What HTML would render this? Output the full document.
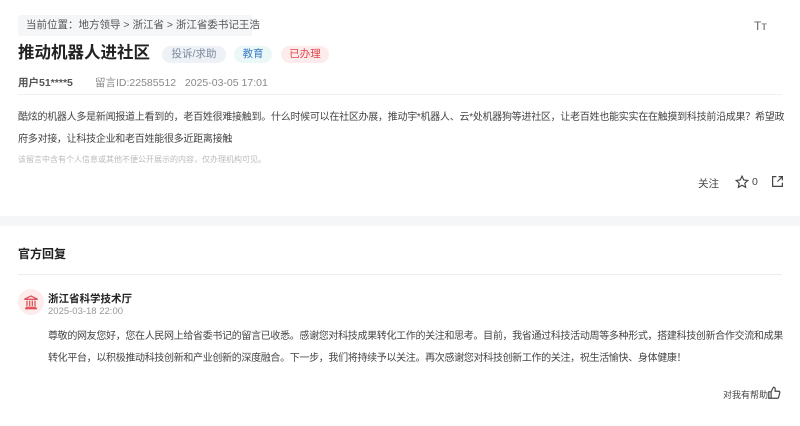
<!DOCTYPE html><html><head><meta charset="utf-8"><style>
body{margin:0;width:800px;height:426px;background:#fff;font-family:"Liberation Sans","Noto Sans CJK SC",sans-serif;position:relative;overflow:hidden;color:#333}
.a{position:absolute;white-space:nowrap}
.tag{position:absolute;height:17px;line-height:17px;border-radius:9px;font-size:10.5px;text-align:center}
</style></head><body>
<div class="a" style="left:18px;top:15px;width:234px;height:21px;background:#f5f6f8;border-radius:2px;font-size:10.5px;line-height:21px;color:#555;padding-left:8px;box-sizing:border-box">当前位置：地方领导 &gt; 浙江省 &gt; 浙江省委书记王浩</div>
<div class="a" style="left:754px;top:19px;font-size:12px;color:#666">Tт</div>
<div class="a" style="left:18px;top:40px;font-size:16.5px;font-weight:bold;color:#222;line-height:26px">推动机器人进社区</div>
<div class="tag" style="left:162px;top:46px;width:64px;background:#eef2f6;color:#7a8a9e">投诉/求助</div>
<div class="tag" style="left:234px;top:46px;width:38px;background:#ebf8f8;color:#3a7ac0">教育</div>
<div class="tag" style="left:281px;top:46px;width:48px;background:#fdeceb;color:#e0454a">已办理</div>
<div class="a" style="left:18px;top:75px;font-size:10.5px;color:#555;font-weight:bold">用户51****5</div>
<div class="a" style="left:95px;top:75px;font-size:10.5px;color:#888">留言ID:22585512&nbsp;&nbsp;&nbsp;2025-03-05 17:01</div>
<div class="a" style="left:18px;top:94px;width:764px;border-top:1px solid #f0f0f0"></div>
<div class="a" style="left:18px;top:107px;font-size:10px;letter-spacing:-0.27px;line-height:22px;color:#444">酷炫的机器人多是新闻报道上看到的，老百姓很难接触到。什么时候可以在社区办展，推动宇*机器人、云*处机器狗等进社区，让老百姓也能实实在在触摸到科技前沿成果？希望政<br>府多对接，让科技企业和老百姓能很多近距离接触</div>
<div class="a" style="left:18px;top:154px;font-size:8px;color:#bbb">该留言中含有个人信息或其他不便公开展示的内容，仅办理机构可见。</div>
<div class="a" style="left:698px;top:176px;font-size:10.5px;color:#444">关注</div>
<svg class="a" style="left:735px;top:175px" width="14" height="14" viewBox="0 0 24 24"><path d="M12 2l3 6.5 7 .8-5.2 4.8 1.5 7L12 17.6 5.7 21.1l1.5-7L2 9.3l7-.8z" fill="none" stroke="#444" stroke-width="2"/></svg>
<div class="a" style="left:752px;top:176px;font-size:10.5px;color:#444">0</div>
<svg class="a" style="left:771px;top:175px" width="13" height="13" viewBox="0 0 24 24"><path d="M10 3H3v18h18v-7M14 3h7v7M21 3l-9 9" fill="none" stroke="#444" stroke-width="2.2"/></svg>
<div class="a" style="left:0;top:216px;width:800px;height:10px;background:#f5f6f8"></div>
<div class="a" style="left:18px;top:245px;font-size:12px;font-weight:bold;color:#222">官方回复</div>
<div class="a" style="left:18px;top:274px;width:764px;border-top:1px solid #eee"></div>
<div class="a" style="left:18px;top:289px;width:26px;height:26px;border-radius:50%;background:#fdeceb"></div>
<svg class="a" style="left:23px;top:294px" width="16" height="16" viewBox="0 0 24 24"><path d="M2 8L12 3l10 5H2zM4 20h16M3 22h18M6 10v8M10 10v8M14 10v8M18 10v8" fill="none" stroke="#e0555a" stroke-width="2"/></svg>
<div class="a" style="left:48px;top:291px;font-size:10.5px;font-weight:bold;color:#222">浙江省科学技术厅</div>
<div class="a" style="left:48px;top:306px;font-size:9.5px;color:#999">2025-03-18 22:00</div>
<div class="a" style="left:48px;top:326px;font-size:10px;letter-spacing:-0.33px;line-height:22px;color:#444">尊敬的网友您好，您在人民网上给省委书记的留言已收悉。感谢您对科技成果转化工作的关注和思考。目前，我省通过科技活动周等多种形式，搭建科技创新合作交流和成果<br>转化平台，以积极推动科技创新和产业创新的深度融合。下一步，我们将持续予以关注。再次感谢您对科技创新工作的关注，祝生活愉快、身体健康！</div>
<div class="a" style="left:723px;top:388px;font-size:9px;color:#444">对我有帮助</div>
<svg class="a" style="left:767px;top:386px" width="14" height="14" viewBox="0 0 24 24"><path d="M7 10v11H3V10zM7 10l4-8c2 0 3 1 3 3v4h6c1.2 0 2 1 2 2l-2 8c-.3 1-1 2-2 2H7" fill="none" stroke="#444" stroke-width="2"/></svg>
</body></html>
